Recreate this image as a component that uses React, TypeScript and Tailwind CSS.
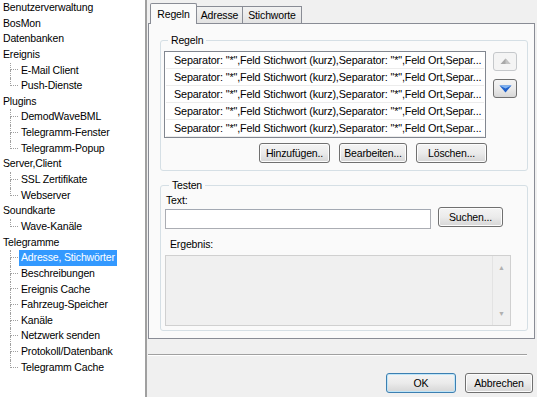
import React from 'react';

type TreeGroup = { label: string; children: string[] };

const tree: TreeGroup[] = [
  { label: 'Benutzerverwaltung', children: [] },
  { label: 'BosMon', children: [] },
  { label: 'Datenbanken', children: [] },
  { label: 'Ereignis', children: ['E-Mail Client', 'Push-Dienste'] },
  { label: 'Plugins', children: ['DemodWaveBML', 'Telegramm-Fenster', 'Telegramm-Popup'] },
  { label: 'Server,Client', children: ['SSL Zertifikate', 'Webserver'] },
  { label: 'Soundkarte', children: ['Wave-Kanäle'] },
  {
    label: 'Telegramme',
    children: [
      'Adresse, Stichwörter',
      'Beschreibungen',
      'Ereignis Cache',
      'Fahrzeug-Speicher',
      'Kanäle',
      'Netzwerk senden',
      'Protokoll/Datenbank',
      'Telegramm Cache',
    ],
  },
];

const rule = 'Separator: "*",Feld Stichwort (kurz),Separator: "*",Feld Ort,Separ...';

function WinButton({ label, width, primary }: { label: string; width: string; primary?: boolean }) {
  return (
    <button
      type="button"
      className={`${width} h-[20px] rounded-[3px] border ${
        primary ? 'border-[#3c7fb1] shadow-[inset_0_0_0_1px_#bfe5f8]' : 'border-[#707070] shadow-[inset_0_0_0_1px_#fcfcfc]'
      } bg-linear-to-b from-[#f4f4f4] via-[#ebebeb] to-[#d6d6d6] text-center leading-[18px] text-black`}
    >
      {label}
    </button>
  );
}

function TreePanel() {
  return (
    <div className="h-full w-[147px] shrink-0 border-r-2 border-r-[#a0a0a0] bg-white">
      {tree.map((group) => (
        <div key={group.label}>
          <div className="h-[15.65px] pl-[3px] leading-[15.65px]">{group.label}</div>
          {group.children.map((child, i) => {
            const last = i === group.children.length - 1;
            const selected = child === 'Adresse, Stichwörter';
            return (
              <div key={child} className="flex h-[15.65px] items-stretch pl-[10px]">
                <div className="flex w-[8px] shrink-0 flex-col">
                  <div className="h-1/2 border-b border-l border-dotted border-[#a0a0a0]" />
                  <div className={`h-1/2 ${last ? '' : 'border-l border-dotted border-[#a0a0a0]'}`} />
                </div>
                <span
                  className={`ml-[1px] px-[2px] leading-[15.65px] ${
                    selected ? 'bg-[#3399ff] text-white' : ''
                  }`}
                >
                  {child}
                </span>
              </div>
            );
          })}
        </div>
      ))}
    </div>
  );
}

function ArrowButton({ dir }: { dir: 'up' | 'down' }) {
  const up = dir === 'up';
  return (
    <button
      type="button"
      className={`flex h-[19px] w-[24px] items-center justify-center rounded-[3px] border ${
        up ? 'border-[#c5c8cb] bg-[#f4f4f4]' : 'border-[#707070] bg-linear-to-b from-[#f4f4f4] via-[#ebebeb] to-[#d6d6d6]'
      }`}
    >
      {up ? (
        <svg width="11" height="7" viewBox="0 0 11 7">
          <polygon points="5.5,0.5 10.5,6 0.5,6" fill="#a8a8a8" />
          <polygon points="5.5,0.5 10.5,6 5.5,6" fill="#c4c4c4" />
        </svg>
      ) : (
        <svg width="13" height="8" viewBox="0 0 13 8">
          <polygon points="0.5,0.5 12.5,0.5 6.5,7.5" fill="#1f5fc8" />
          <polygon points="0.5,0.5 12.5,0.5 6.5,3.5" fill="#7fb3f2" />
        </svg>
      )}
    </button>
  );
}

function Tabs() {
  return (
    <div className="flex h-[22px] items-end pl-[2px]">
      <div className="relative z-10 -mb-px h-[21px] w-[47px] rounded-t-[2px] border border-b-0 border-[#898c95] bg-[#fafafa] pt-[3px] text-center">
        Regeln
      </div>
      <div className="h-[17px] w-[46px] border border-b-0 border-l-0 border-[#898c95] bg-linear-to-b from-[#f2f2f2] to-[#e3e3e3] pt-[1px] text-center">
        Adresse
      </div>
      <div className="h-[17px] w-[59px] border border-b-0 border-l-0 border-[#898c95] bg-linear-to-b from-[#f2f2f2] to-[#e3e3e3] pt-[1px] text-center">
        Stichworte
      </div>
    </div>
  );
}

export default function App() {
  return (
    <div className="flex h-[397px] w-[537px] overflow-hidden bg-[#f0f0f0] font-['Liberation_Sans',Arial,sans-serif] text-[10.5px] tracking-[-0.15px] text-black">
      <TreePanel />

      <div className="flex flex-1 flex-col">
        <div className="ml-[1px] mt-[1px] w-[387px]">
          <Tabs />
          <div className="h-[316px] border border-[#898c95] bg-[#fafafa] pr-[6px] pl-[11px] pt-[10px]">
            <fieldset className="rounded-[3px] border border-[#d5dfe5] px-[3px] pb-[7px]">
              <legend className="ml-[4px] px-[3px] leading-[13px]">Regeln</legend>
              <div className="mt-[4px] flex gap-[7px]">
                <div className="h-[87px] w-[322px] border border-[#828790] bg-white px-px text-[10.8px]">
                  {[0, 1, 2, 3, 4].map((i) => (
                    <div
                      key={i}
                      className="h-[17px] overflow-hidden whitespace-nowrap border-b border-[#ececec] pl-[8px] leading-[16px]"
                    >
                      {rule}
                    </div>
                  ))}
                </div>
                <div className="flex flex-col gap-[8px] pt-[1px]">
                  <ArrowButton dir="up" />
                  <ArrowButton dir="down" />
                </div>
              </div>
              <div className="mt-[5px] flex justify-end gap-[9px] pr-[37px]">
                <WinButton label="Hinzufügen.." width="w-[71px]" />
                <WinButton label="Bearbeiten..." width="w-[68px]" />
                <WinButton label="Löschen..." width="w-[71px]" />
              </div>
            </fieldset>

            <fieldset className="mt-[8px] rounded-[3px] border border-[#d5dfe5] pb-[4px] pl-[4px] pr-[14px]">
              <legend className="ml-[4px] px-[3px] leading-[13px]">Testen</legend>
              <div className="h-[15px] pl-[1px] pt-[2px] leading-[13px]">Text:</div>
              <div className="flex items-start gap-[7px]">
                <div className="mt-[2px] h-[20px] w-[266px] border border-[#abadb3] border-t-[#a3a9b3] bg-white" />
                <WinButton label="Suchen..." width="w-[65px]" />
              </div>
              <div className="mt-[9px] h-[13px] pl-[5px] leading-[13px]">Ergebnis:</div>
              <div className="mt-[4px] flex h-[71px] w-[346px] border border-[#d0d0d0] bg-[#f0f0f0]">
                <div className="flex-1" />
                <div className="flex w-[18px] flex-col items-center justify-between border-l border-[#e3e3e3] py-[8px] text-[7px] leading-[7px] text-[#b0b0b0]">
                  <span>▲</span>
                  <span>▼</span>
                </div>
              </div>
            </fieldset>
          </div>
        </div>

        <div className="ml-px mt-[15px] w-[379px] border-t border-[#a0a0a0] border-b border-b-white" />

        <div className="mt-[17px] flex justify-end gap-[9px] pr-[4px]">
          <WinButton label="OK" width="w-[70px]" primary />
          <WinButton label="Abbrechen" width="w-[68px]" />
        </div>
      </div>
    </div>
  );
}
